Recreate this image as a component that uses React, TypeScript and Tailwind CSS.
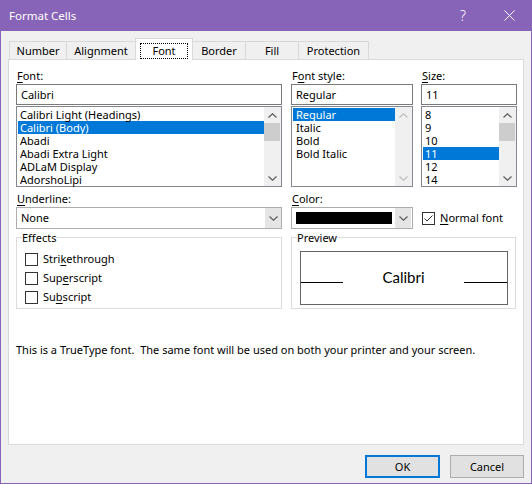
import React from "react";

const fontItems = ["Calibri Light (Headings)", "Calibri (Body)", "Abadi", "Abadi Extra Light", "ADLaM Display", "AdorshoLipi"];
const styleItems = ["Regular", "Italic", "Bold", "Bold Italic"];
const sizeItems = ["8", "9", "10", "11", "12", "14"];

const tabs = [
  { name: "Number", w: "w-[57px]" },
  { name: "Alignment", w: "w-[69px]" },
  { name: "Font", w: "w-[58px]" },
  { name: "Border", w: "w-[52px]" },
  { name: "Fill", w: "w-[53px]" },
  { name: "Protection", w: "w-[71px]" },
];

function Key({ children }: { children: React.ReactNode }) {
  return <span className="underline underline-offset-[2px] decoration-1">{children}</span>;
}

function Chevron({ up, color }: { up?: boolean; color: string }) {
  return (
    <svg width="9" height="5" viewBox="0 0 9 5">
      <polyline
        points={up ? "0.5,4.5 4.5,0.8 8.5,4.5" : "0.5,0.5 4.5,4.2 8.5,0.5"}
        fill="none"
        stroke={color}
        strokeWidth="1.3"
      />
    </svg>
  );
}

function ScrollBar({ enabled }: { enabled: boolean }) {
  const c = enabled ? "#606060" : "#bfbfbf";
  return (
    <div className="w-[17px] flex flex-col bg-[#f0f0f0]">
      <div className="h-[16px] flex items-center justify-center">
        <Chevron up color={c} />
      </div>
      <div className="flex-1">{enabled && <div className="h-[18px] w-[16px] bg-[#cdcdcd]" />}</div>
      <div className="h-[16px] flex items-center justify-center">
        <Chevron color={c} />
      </div>
    </div>
  );
}

function ListBox({ items, selected, scroll, textPad }: { items: string[]; selected: number; scroll: boolean; textPad: string }) {
  return (
    <div className="h-[81px] border border-[#828790] bg-white flex">
      <div className="flex-1 pl-px pt-px">
        {items.map((it, i) => (
          <div
            key={it}
            className={`h-[13px] leading-[13px] ${textPad} ${i === selected ? "bg-[#0078d7] text-white" : ""}`}
          >
            {it}
          </div>
        ))}
      </div>
      <ScrollBar enabled={scroll} />
    </div>
  );
}

function TextBox({ value }: { value: string }) {
  return <div className="h-[21px] border border-[#7a7a7a] bg-white pl-[4px] leading-[19px]">{value}</div>;
}

function ComboButton() {
  return (
    <div className="w-[16px] bg-[#e5e5e5] flex items-center justify-center">
      <Chevron color="#606060" />
    </div>
  );
}

function CheckBox({ checked }: { checked?: boolean }) {
  return (
    <div className="w-[13px] h-[13px] border border-[#333333] bg-white flex items-center justify-center">
      {checked && (
        <svg width="11" height="11" viewBox="0 0 11 11">
          <polyline points="1.5,5.5 4,8 9.5,2.5" fill="none" stroke="#333333" strokeWidth="1" />
        </svg>
      )}
    </div>
  );
}

export default function App() {
  return (
    <div className="w-[532px] h-[484px] bg-[#8764b8] flex flex-col text-[11px] text-black font-['Noto_Sans',sans-serif]">
      {/* Title bar */}
      <div className="h-[31px] flex items-center text-white">
        <div className="pl-[9px] flex-1 text-[11.5px]">Format Cells</div>
        <div className="w-[46px] text-center text-[14px] font-light">?</div>
        <div className="w-[46px] flex justify-center">
          <svg width="11" height="11" viewBox="0 0 11 11">
            <path d="M0.5 0.5 L10.5 10.5 M10.5 0.5 L0.5 10.5" stroke="white" strokeWidth="1" />
          </svg>
        </div>
      </div>

      <div className="flex-1 mx-px mb-px bg-[#f0f0f0] flex flex-col">
        {/* Tabs */}
        <div className="mt-[7px] h-[21px] pl-[8px] flex items-end">
          {tabs.map((t) =>
            t.name === "Font" ? (
              <div
                key={t.name}
                className={`${t.w} h-[22px] -mb-px relative z-10 bg-white border-t border-l border-r border-[#d9d9d9] flex justify-center pt-[4px]`}
              >
                <span className="h-[16px] w-[48px] border border-dotted border-black leading-[14px] text-center">Font</span>
              </div>
            ) : (
              <div
                key={t.name}
                className={`${t.w} h-[18px] border-t border-[#d9d9d9] ${t.name === "Border" ? "" : "border-l"} ${
                  t.name === "Protection" ? "border-r" : ""
                } flex items-center justify-center leading-[16px]`}
              >
                {t.name}
              </div>
            )
          )}
        </div>

        {/* Panel */}
        <div className="mx-[7px] h-[386px] border border-[#d9d9d9] bg-white pl-[7px] pt-[8px]">
          <div className="flex">
            <div className="w-[266px]">
              <div className="h-[16px] leading-[16px] pl-px">
                <Key>F</Key>ont:
              </div>
              <TextBox value="Calibri" />
              <div className="mt-px">
                <ListBox items={fontItems} selected={1} scroll textPad="pl-[2px]" />
              </div>
            </div>
            <div className="ml-[9px] w-[122px]">
              <div className="h-[16px] leading-[16px] pl-px">
                F<Key>o</Key>nt style:
              </div>
              <TextBox value="Regular" />
              <div className="mt-px">
                <ListBox items={styleItems} selected={0} scroll={false} textPad="pl-[3px]" />
              </div>
            </div>
            <div className="ml-[8px] w-[96px]">
              <div className="h-[16px] leading-[16px] pl-px">
                <Key>S</Key>ize:
              </div>
              <TextBox value="11" />
              <div className="mt-px">
                <ListBox items={sizeItems} selected={3} scroll textPad="pl-[2px]" />
              </div>
            </div>
          </div>

          {/* Underline / Color row */}
          <div className="flex mt-[4px]">
            <div className="w-[266px]">
              <div className="h-[16px] leading-[16px] pl-px">
                <Key>U</Key>nderline:
              </div>
              <div className="h-[22px] border border-[#adadad] bg-white flex">
                <div className="flex-1 pl-[4px] leading-[20px]">None</div>
                <ComboButton />
              </div>
            </div>
            <div className="ml-[9px] w-[122px]">
              <div className="h-[16px] leading-[16px] pl-px">
                <Key>C</Key>olor:
              </div>
              <div className="h-[22px] border border-[#adadad] bg-white flex items-stretch">
                <div className="ml-[4px] my-[4px] w-[96px] bg-black" />
                <div className="ml-[3px] flex">
                  <ComboButton />
                </div>
              </div>
            </div>
            <div className="ml-[9px] mt-[16px] h-[22px] flex items-center gap-[5px]">
              <CheckBox checked />
              <span>
                <Key>N</Key>ormal font
              </span>
            </div>
          </div>

          {/* Effects / Preview */}
          <div className="flex mt-px">
            <fieldset className="w-[266px] h-[79px] border border-[#dcdcdc]">
              <legend className="ml-[5px] leading-[15px]">Effects</legend>
              <div className="pl-[8px] pt-[5px]">
                {[
                  ["Stri", "k", "ethrough"],
                  ["Sup", "e", "rscript"],
                  ["Su", "b", "script"],
                ].map(([a, k, b]) => (
                  <div key={a + b} className="h-[19px] flex items-center gap-[5px]">
                    <CheckBox />
                    <span>
                      {a}
                      <Key>{k}</Key>
                      {b}
                    </span>
                  </div>
                ))}
              </div>
            </fieldset>
            <fieldset className="ml-[9px] w-[225px] h-[79px] border border-[#dcdcdc]">
              <legend className="ml-[5px] leading-[15px]">Preview</legend>
              <div className="pl-[8px] pt-[6px]">
                <div className="w-[208px] h-[54px] border border-[#646464] pt-[16px]">
                  <div className="flex items-baseline">
                    <div className="w-[42px] h-px bg-black" />
                    <div className="flex-1 text-center text-[15px] leading-[18px] font-['Lato','Noto_Sans',sans-serif]">Calibri</div>
                    <div className="w-[43px] h-px bg-black" />
                  </div>
                </div>
              </div>
            </fieldset>
          </div>

          <p className="mt-[33px] leading-[15px] whitespace-pre">
            This is a TrueType font.  The same font will be used on both your printer and your screen.
          </p>
        </div>

        {/* Buttons */}
        <div className="mt-[10px] flex justify-end gap-[10px] pr-[7px]">
          <button className="w-[75px] h-[23px] bg-[#e1e1e1] border-2 border-[#0078d7] leading-[19px]">OK</button>
          <button className="w-[74px] h-[23px] bg-[#e1e1e1] border border-[#adadad] leading-[21px]">Cancel</button>
        </div>
      </div>
    </div>
  );
}
